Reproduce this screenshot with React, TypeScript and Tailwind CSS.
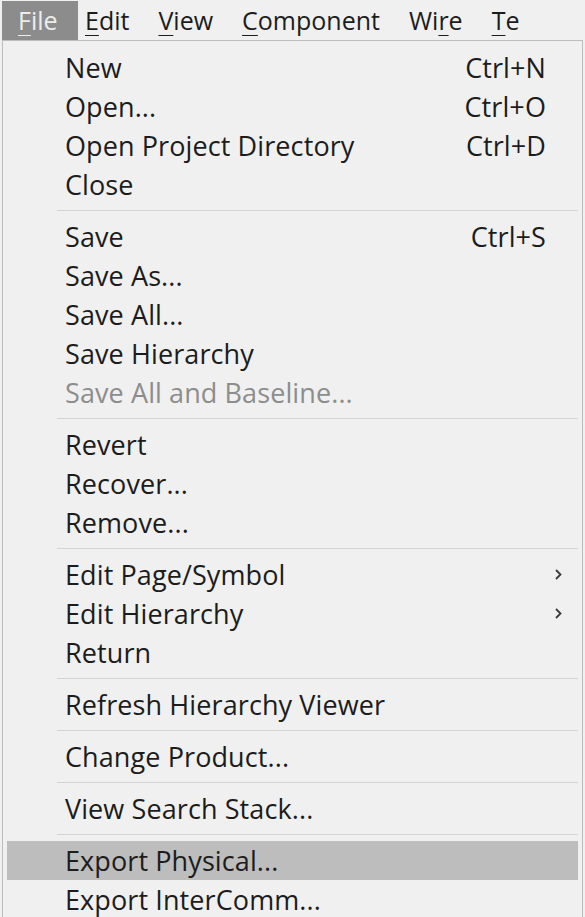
import { ReactNode } from "react";

type Item = {
    label: string
    shortcut?: string
    submenu?: boolean
    disabled?: boolean
    active?: boolean
} | "sep";

const items: Item[] = [
    { label: "New", shortcut: "Ctrl+N" },
    { label: "Open...", shortcut: "Ctrl+O" },
    { label: "Open Project Directory", shortcut: "Ctrl+D" },
    { label: "Close" },
    "sep",
    { label: "Save", shortcut: "Ctrl+S" },
    { label: "Save As..." },
    { label: "Save All..." },
    { label: "Save Hierarchy" },
    { label: "Save All and Baseline...", disabled: true },
    "sep",
    { label: "Revert" },
    { label: "Recover..." },
    { label: "Remove..." },
    "sep",
    { label: "Edit Page/Symbol", submenu: true },
    { label: "Edit Hierarchy", submenu: true },
    { label: "Return" },
    "sep",
    { label: "Refresh Hierarchy Viewer" },
    "sep",
    { label: "Change Product..." },
    "sep",
    { label: "View Search Stack..." },
    "sep",
    { label: "Export Physical...", active: true },
    { label: "Export InterComm..." },
];

const TopItem = ({ pre, u, post, active }: { pre?: string, u: string, post: string, active?: boolean }) => {
    return (
        <div className={active
            ? "h-[39px] mt-[1px] ml-[2px] w-[76px] pl-[16px] flex items-center bg-[#8c8c8c] text-[#ececec] shrink-0"
            : "h-[39px] mt-[1px] pl-[7px] pr-[22px] flex items-center text-[#1c1c1c] shrink-0"}>
            <span>{pre}<span className="underline underline-offset-[5px] decoration-1">{u}</span>{post}</span>
        </div>
    )
}

const Chevron = () => (
    <svg width="7" height="11" viewBox="0 0 7 11" className="text-[#3a3a3a]">
        <path d="M1 1l4.5 4.5L1 10" fill="none" stroke="currentColor" strokeWidth="1.8" />
    </svg>
)

const Row = ({ children }: { children: ReactNode }) => <>{children}</>

export default function App() {
    return (
        <div className="w-[585px] h-[917px] overflow-hidden bg-[#f0f0f0] font-['Open_Sans',sans-serif] leading-none">
            <div className="flex h-[40px] overflow-hidden text-[25px]">
                <TopItem u="F" post="ile" active />
                <TopItem u="E" post="dit" />
                <TopItem u="V" post="iew" />
                <TopItem u="C" post="omponent" />
                <TopItem pre="Wi" u="r" post="e" />
                <TopItem u="T" post="e" />
            </div>
            <div className="ml-[2px] w-[581px] h-[877px] border-l border-r border-t border-[#bdbdbd] pt-[7px] text-[27px] tracking-[0.1px]">
                {items.map((it, i) => {
                    if (it === "sep") {
                        return (
                            <div key={i} className="h-[13px] flex items-center ml-[54px] mr-[4px]">
                                <div className="h-px w-full bg-[#d4d4d4]" />
                            </div>
                        )
                    }
                    return (
                        <Row key={i}>
                            <div className={`h-[39px] mx-[4px] pl-[58px] pr-[16px] flex items-center ${it.active ? "bg-[#bdbdbd]" : ""} ${it.disabled ? "text-[#8d8d8d]" : "text-[#1c1c1c]"}`}>
                                <span className="flex-1">{it.label}</span>
                                {it.shortcut && <span>{it.shortcut}</span>}
                                <span className="w-[16px] flex justify-end">
                                    {it.submenu && <Chevron />}
                                </span>
                            </div>
                        </Row>
                    )
                })}
            </div>
        </div>
    )
}
